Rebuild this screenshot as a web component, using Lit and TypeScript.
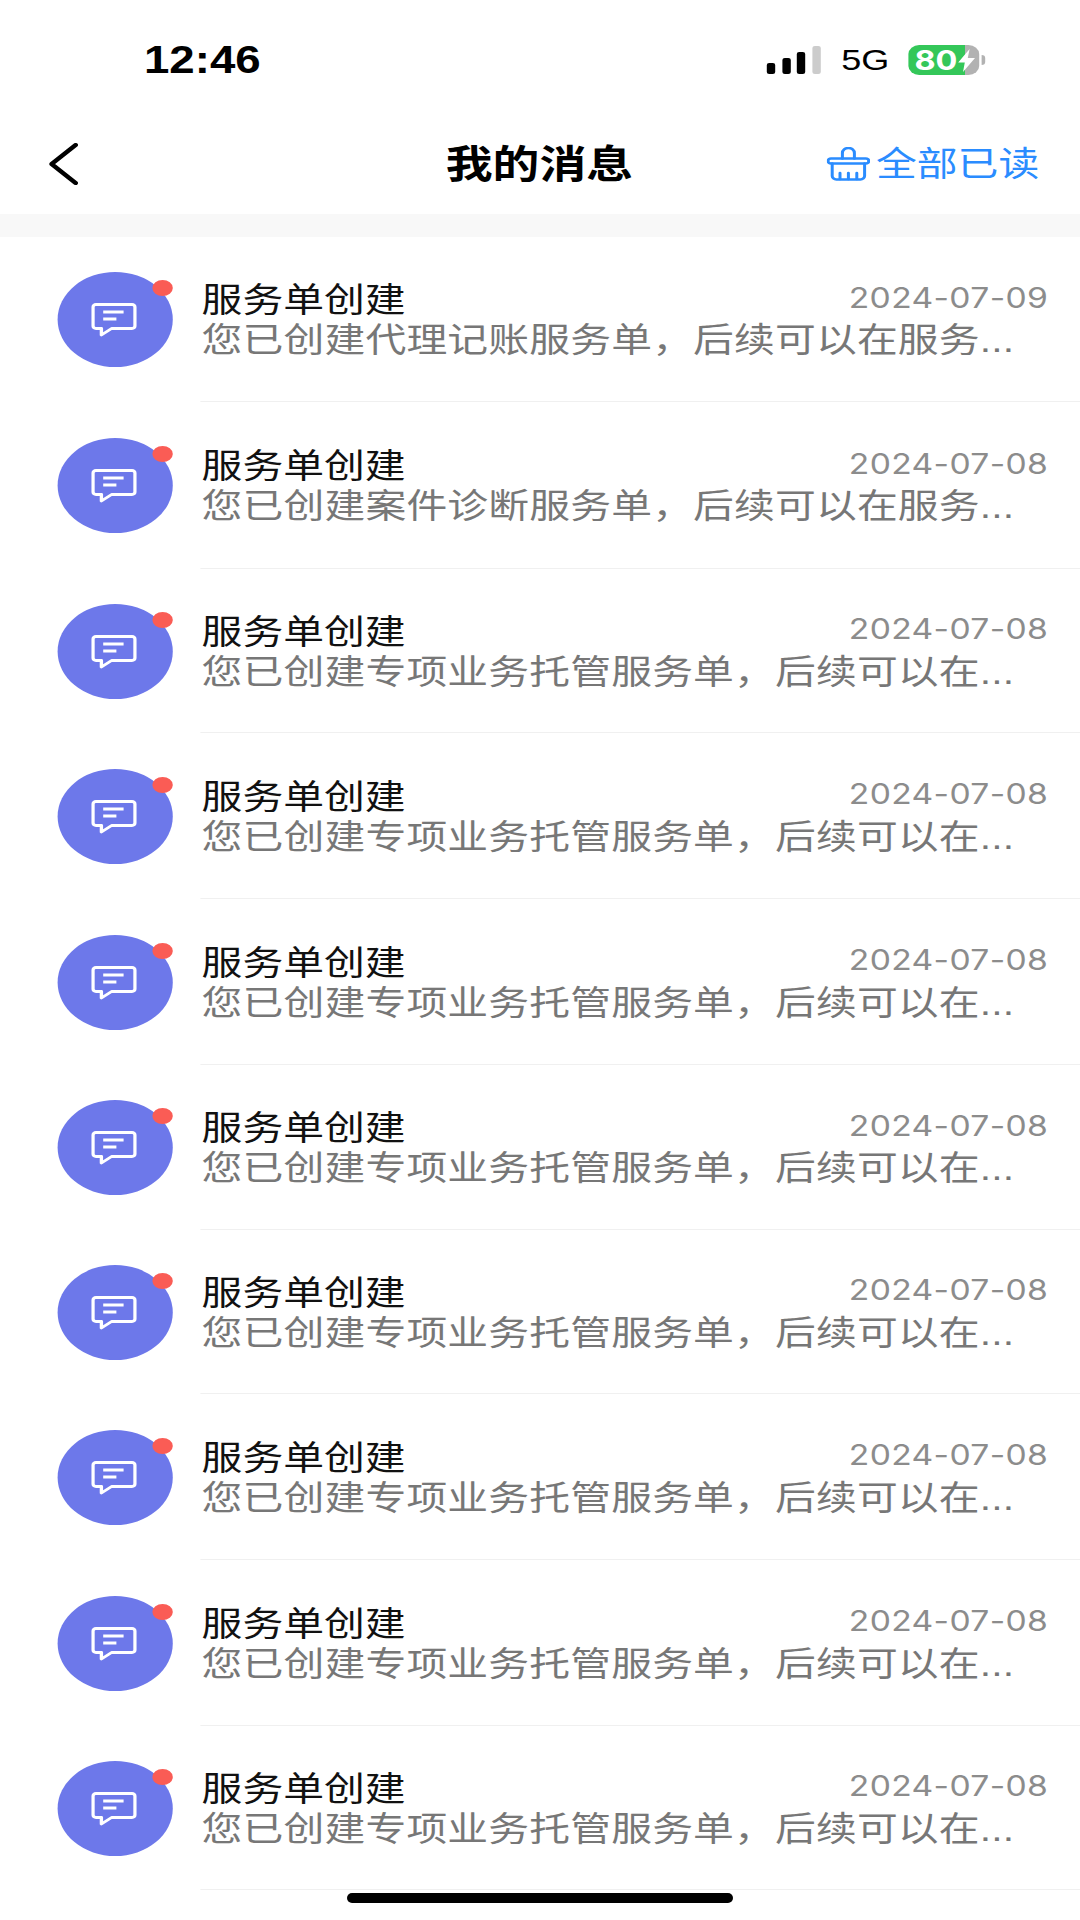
import { LitElement, html, css } from 'lit';
import { customElement } from 'lit/decorators.js';

const CREATED_PREFIX = '您已创建';
const rows = [
  { date: '2024-07-09', text: '代理记账服务单，后续可以在服务...', height: 165 },
  { date: '2024-07-08', text: '案件诊断服务单，后续可以在服务...', height: 167 },
  { date: '2024-07-08', text: '专项业务托管服务单，后续可以在...', height: 164 },
  { date: '2024-07-08', text: '专项业务托管服务单，后续可以在...', height: 166 },
  { date: '2024-07-08', text: '专项业务托管服务单，后续可以在...', height: 166 },
  { date: '2024-07-08', text: '专项业务托管服务单，后续可以在...', height: 165 },
  { date: '2024-07-08', text: '专项业务托管服务单，后续可以在...', height: 164 },
  { date: '2024-07-08', text: '专项业务托管服务单，后续可以在...', height: 166 },
  { date: '2024-07-08', text: '专项业务托管服务单，后续可以在...', height: 166 },
  { date: '2024-07-08', text: '专项业务托管服务单，后续可以在...', height: 164 },
];

@customElement('app-root')
export class AppRoot extends LitElement {
  static styles = css`
    :host {
      display: block;
      position: relative;
      width: 1080px;
      height: 1920px;
      overflow: hidden;
      background: #fff;
      font-family: "Liberation Sans", "Noto Sans CJK SC", sans-serif;
      color: #000;
    }
    /* the screenshot is stretched sideways, everything is laid out 900 wide */
    .stage {
      width: 900px;
      transform: scaleX(1.2);
      transform-origin: 0 0;
    }
    .status {
      height: 114px;
      box-sizing: border-box;
      padding: 38px 0 0 120px;
      display: flex;
      align-items: flex-start;
    }
    .clock {
      font-size: 38px;
      line-height: 44px;
      font-weight: 700;
    }
    .status-right {
      margin-left: auto;
      margin-right: 79px;
      height: 44px;
      display: flex;
      align-items: center;
    }
    .signal {
      display: flex;
      align-items: flex-end;
      gap: 5.5px;
      height: 28px;
      margin-right: 17px;
    }
    .signal span {
      width: 7px;
      background: #000;
      border-radius: 2px;
    }
    .signal .off {
      background: #ccc;
    }
    .net {
      font-size: 30px;
      line-height: 30px;
      margin-right: 16px;
    }
    .battery {
      position: relative;
      width: 59px;
      height: 30px;
      border-radius: 9px;
      overflow: hidden;
      background: linear-gradient(90deg, #34c759 0 47px, #b2b2b2 47px);
      color: #fff;
      display: flex;
      align-items: center;
      padding-left: 5px;
      box-sizing: border-box;
      font-family: Inter, "Liberation Sans", sans-serif;
      font-size: 27px;
      font-weight: 700;
    }
    .battery svg {
      position: absolute;
      left: 41px;
      top: 4px;
    }
    .nub {
      width: 3px;
      height: 10px;
      margin-left: 2px;
      border-radius: 0 3px 3px 0;
      background: #b2b2b2;
    }
    .nav {
      height: 100px;
      display: grid;
      grid-template-columns: 1fr auto 1fr;
      align-items: center;
      padding: 0 34px 0 41px;
    }
    .nav h1 {
      margin: 0 8px 7px 0;
      font-size: 39px;
      font-weight: 700;
    }
    .read-all {
      justify-self: end;
      display: flex;
      align-items: center;
      gap: 5px;
      color: #2a8cff;
      font-size: 34px;
    }
    .read-all span {
      margin-bottom: 5px;
    }
    .band {
      height: 23px;
      background: #f8f8f8;
    }
    .row {
      display: flex;
      align-items: stretch;
    }
    .avatar-cell {
      width: 167px;
      flex: none;
      box-sizing: border-box;
      padding-left: 48px;
      display: flex;
      align-items: center;
    }
    .avatar {
      position: relative;
      width: 96px;
      height: 95px;
      border-radius: 50%;
      background: #6d78ea;
      display: flex;
      align-items: center;
      justify-content: center;
    }
    .avatar svg {
      margin-right: 3px;
      margin-top: 1px;
    }
    .dot {
      position: absolute;
      left: 79px;
      top: 8px;
      width: 17px;
      height: 16px;
      border-radius: 50%;
      background: #fa5c55;
    }
    .body {
      flex: 1;
      min-width: 0;
      box-sizing: border-box;
      border-bottom: 1px solid #f0f0f0;
      padding: 4px 26.5px 0 1px;
      display: flex;
      flex-direction: column;
      justify-content: center;
    }
    .top {
      display: flex;
      justify-content: space-between;
      align-items: center;
      height: 39px;
    }
    .title {
      font-size: 34px;
      line-height: 39px;
      color: #111;
    }
    .date {
      margin-bottom: 6px;
      font-family: Inter, "Liberation Sans", sans-serif;
      font-size: 28px;
      font-weight: 400;
      letter-spacing: 0.3px;
      color: #8c8c8c;
    }
    .sub {
      font-size: 34px;
      line-height: 41px;
      letter-spacing: 0.13px;
      color: #777;
      white-space: nowrap;
    }
    .home {
      position: absolute;
      left: 347px;
      top: 1893px;
      width: 386px;
      height: 10px;
      border-radius: 5px;
      background: #000;
    }
  `;

  bubble() {
    return html`<svg width="38" height="34" viewBox="0 0 38 34" fill="none" stroke="#fff" stroke-width="2.8" stroke-linejoin="round">
      <path d="M4 1.5H34a2.5 2.5 0 0 1 2.5 2.5V23a2.5 2.5 0 0 1-2.5 2.5H17L8.5 32V25.5H4A2.5 2.5 0 0 1 1.5 23V4A2.5 2.5 0 0 1 4 1.5Z" />
      <path d="M10 9H27M10 16H21" />
    </svg>`;
  }

  basket() {
    return html`<svg width="36" height="34" viewBox="0 0 36 34" fill="none" stroke="#2a8cff" stroke-width="2.5" stroke-linecap="round" stroke-linejoin="round">
      <path d="M13 11.5V6a5 5 0 0 1 10 0v5.5" />
      <path d="M3.5 11.5H32.5a2.5 2.5 0 0 1 0 5H3.5a2.5 2.5 0 0 1 0-5Z" />
      <path d="M4.5 16.5V29a3.5 3.5 0 0 0 3.5 3.5H28a3.500 3.500 0 0 0 3.500-3.500V16.500" />
      <path d="M11 26V32M18 26V32M25 26V32" />
    </svg>`;
  }

  render() {
    return html`
      <div class="stage">
        <div class="status">
          <div class="clock">12:46</div>
          <div class="status-right">
            <div class="signal">
              <span style="height:11px"></span>
              <span style="height:16px"></span>
              <span style="height:22px"></span>
              <span class="off" style="height:28px"></span>
            </div>
            <div class="net">5G</div>
            <div class="battery">
              80
              <svg width="15" height="23" viewBox="0 0 15 23"><path d="M10 0 0.500 13.500h5.500L4.500 23 14.500 9H8.500Z" fill="#fff" /></svg>
            </div>
            <div class="nub"></div>
          </div>
        </div>
        <div class="nav">
          <svg width="24" height="42" viewBox="0 0 24 42" fill="none" stroke="#000" stroke-width="4" stroke-linecap="round" stroke-linejoin="round">
            <path d="M22 2 2 21l20 19" />
          </svg>
          <h1>我的消息</h1>
          <div class="read-all">${this.basket()}<span>全部已读</span></div>
        </div>
        <div class="band"></div>
        ${rows.map(
          (row) => html`
            <div class="row" style="height:${row.height}px">
              <div class="avatar-cell">
                <div class="avatar">${this.bubble()}<span class="dot"></span></div>
              </div>
              <div class="body">
                <div class="top">
                  <span class="title">服务单创建</span>
                  <span class="date">${row.date}</span>
                </div>
                <div class="sub">${CREATED_PREFIX}${row.text}</div>
              </div>
            </div>
          `,
        )}
      </div>
      <div class="home"></div>
    `;
  }
}
